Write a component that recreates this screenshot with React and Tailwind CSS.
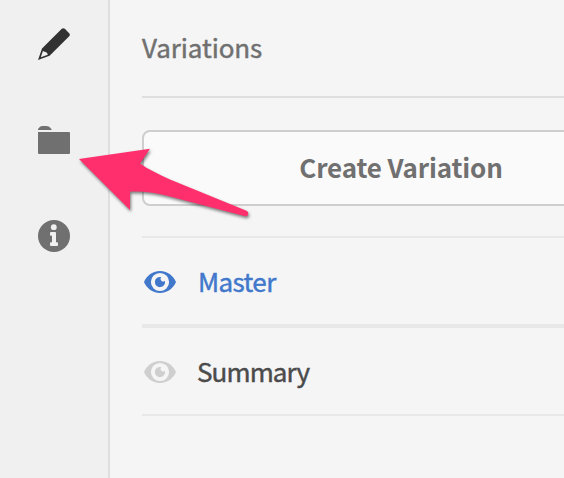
function PencilIcon() {
  return (
    <svg className="block size-8" viewBox="0 0 32 32">
      <path fill="#323232" fillRule="evenodd" d="M23.8 .8 Q25.2 -.5 26.8 .8 L31.2 5.2 Q32.5 6.7 31.2 8.2 L11.6 27.8 L0 32 L4 20.4 Z M5 22.8 L2.8 29.2 L9.8 26.8 Q9.6 24.2 7 23.8 Q5.4 23.6 5 22.8 Z" />
    </svg>
  );
}

function FolderIcon() {
  return (
    <svg className="block h-7 w-8" viewBox="0 0 32 28">
      <path fill="#707070" d="M0 4 V3 Q2 0 4 0 H8.5 Q11 0 12.3 1.8 L14 4 Z M0 6 H31 Q32 6 32 7 V27 Q32 28 31 28 H1 Q0 28 0 27 Z" />
    </svg>
  );
}

function InfoIcon() {
  return (
    <svg className="block size-8" viewBox="0 0 32 32">
      <circle cx="16" cy="16" r="16" fill="#707070" />
      <circle cx="15.8" cy="7.2" r="2.9" fill="#f0f0f0" />
      <path fill="#f0f0f0" d="M13 12 H17 Q18 12 18 13 V22.3 H19 Q20 22.3 20 23.3 V25 Q20 26 19 26 H13 Q12 26 12 25 V23.3 Q12 22.3 13 22.3 H14 V15.8 H13 Q12 15.8 12 14.8 V13 Q12 12 13 12 Z" />
    </svg>
  );
}

function EyeIcon() {
  return (
    <svg className="block h-[22px] w-8 shrink-0" viewBox="0 0 32 22" fill="currentColor">
      <path fillRule="evenodd" d="M16 0 C8 0 2.6 5.2 0 11 C2.6 16.8 8 22 16 22 C24 22 29.4 16.8 32 11 C29.4 5.2 24 0 16 0 Z M16 1.9 A9.1 9.1 0 1 1 16 20.1 A9.1 9.1 0 1 1 16 1.9 Z" />
      <path d="M17.3 6.1 A5.1 5.1 0 1 0 20.9 9.7 A2.5 2.5 0 1 1 17.3 6.1 Z" />
    </svg>
  );
}

function Arrow() {
  return (
    <svg className="pointer-events-none absolute left-[70px] top-[138px] h-[90px] w-[190px] drop-shadow-[1px_2px_1.5px_rgba(0,0,0,0.5)]" viewBox="70 138 190 90">
      <path fill="#ff2f6d" d="M79 159 L150 148.7 L140 163.6 C148 169.5 158 174 170 179.5 L246.5 210.8 A2.8 2.8 0 0 1 245.3 216.2 L166 195.5 C153 192 143 191 130 191.5 V210 Z" />
    </svg>
  );
}

export default function App() {
  return (
    <div className="relative flex h-[478px] w-[564px] overflow-hidden bg-[#f5f5f5] font-['Noto_Sans_CJK_SC',sans-serif]">
      <nav className="flex w-[110px] shrink-0 flex-col items-center border-r-2 border-[#dfdfdf] bg-[#f0f0f0] pt-7">
        <PencilIcon />
        <div className="mt-[66px]"><FolderIcon /></div>
        <div className="mt-[66px]"><InfoIcon /></div>
      </nav>
      <main className="w-[550px] shrink-0 pl-8">
        <header className="flex h-[98px] items-center border-b-2 border-[#dfdfdf] pb-[3px] text-[#707070]">
          <h1 className="whitespace-nowrap text-[26px] leading-8 tracking-[-0.1px] [-webkit-text-stroke:0.45px_currentColor]">Variations</h1>
        </header>
        <button className="mt-8 flex h-[76px] w-full items-center justify-center rounded-lg border-2 border-[#cecece] bg-[#fafafa] pb-0.5 text-[26px] font-bold leading-8 tracking-[-0.13px] text-[#707070]">
          <span>Create Variation</span>
        </button>
        <ul className="mt-[30px] border-t-2 border-[#e8e8e8] text-[26px] leading-8">
          <li className="flex h-[90px] items-center border-b-4 border-[#e8e8e8] pl-0.5 pt-0.5 text-[#4178cc]">
            <EyeIcon />
            <span className="ml-[22px] pb-0.5 tracking-[-0.6px] [-webkit-text-stroke:0.45px_currentColor]">Master</span>
          </li>
          <li className="flex h-[88px] items-center border-b-2 border-[#e8e8e8] pl-0.5 pt-0.5 text-[#cfcfcf]">
            <EyeIcon />
            <span className="ml-[21px] pb-0.5 tracking-[-0.9px] text-[#4b4b4b] [-webkit-text-stroke:0.45px_currentColor]">Summary</span>
          </li>
        </ul>
      </main>
      <Arrow />
    </div>
  );
}
